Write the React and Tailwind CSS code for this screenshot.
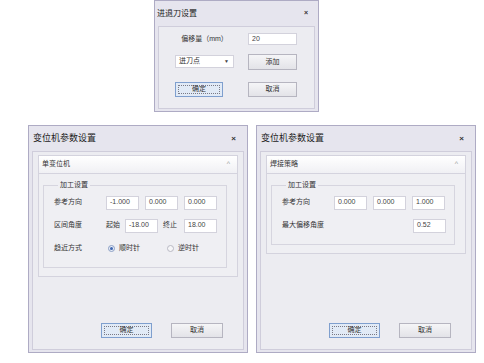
const FONT = "font-['Liberation_Sans','Noto_Sans_CJK_SC',sans-serif]";

function Btn({ children, primary, className = "" }) {
  if (primary) {
    return (
      <div className={`flex border border-[#7f9fce] bg-[#e1eaf6] p-[2px] ${className}`}>
        <div className="flex flex-1 items-center justify-center border border-dotted border-[#7a7a86] text-[7px] text-[#333]">
          {children}
        </div>
      </div>
    );
  }
  return (
    <div
      className={`flex items-center justify-center border border-[#b6b5c0] bg-gradient-to-b from-[#f5f5f7] to-[#e3e3e8] text-[7px] text-[#333] ${className}`}
    >
      {children}
    </div>
  );
}

function Field({ value, className = "w-[33px]" }) {
  return (
    <div
      className={`flex h-[14px] items-center border border-[#d3d2dc] bg-white px-[3px] text-[7px] text-[#444] ${className}`}
    >
      {value}
    </div>
  );
}

function Radio({ checked }) {
  return (
    <div
      className={`flex h-[7px] w-[7px] items-center justify-center rounded-full border ${
        checked ? "border-[#8c9fc4] bg-[#e6ecf7]" : "border-[#b9b9c3] bg-[#f6f6f8]"
      }`}
    >
      {checked && <div className="h-[3px] w-[3px] rounded-full bg-[#3f67b0]" />}
    </div>
  );
}

function Row({ label, children }) {
  return (
    <div className="flex h-[14px] items-center">
      <span className="w-[52px] text-[7px] text-[#333]">{label}</span>
      {children}
    </div>
  );
}

function ParamDialog({ section, children }) {
  return (
    <div className="flex h-[228px] w-[220px] flex-col border border-[#aeabc4] bg-[#e6e5ee]">
      {/* title bar */}
      <div className="flex h-[25px] items-center justify-between pl-[4px] pr-[11px]">
        <span className="text-[9px] text-[#222]">变位机参数设置</span>
        <span className="text-[8px] font-bold text-[#333]">×</span>
      </div>

      {/* body */}
      <div className="mx-[3px] mb-[2px] flex flex-1 flex-col border border-[#cfcddb] bg-[#ececf1] px-[5px] pt-[3px]">
        <div className="border border-[#d4d3de] bg-[#efeff3]">
          <div className="flex h-[18px] items-center justify-between border-b border-[#d4d3de] bg-gradient-to-b from-white to-[#f0f0f4] pl-[3px] pr-[7px]">
            <span className="text-[7px] text-[#333]">{section}</span>
            <span className="text-[7px] text-[#999]">^</span>
          </div>
          <fieldset className="mb-[8px] ml-[4px] mr-[10px] mt-[6px] border border-[#d6d5df] pb-[11px] pl-[10px] pt-[5px]">
            <legend className="ml-[4px] px-[2px] text-[7px] text-[#333]">加工设置</legend>
            <div className="flex flex-col gap-[9px]">{children}</div>
          </fieldset>
        </div>

        <div className="flex-1" />

        <div className="flex justify-end gap-[19px] pb-[11px] pr-[15px]">
          <Btn primary className="h-[15px] w-[51px]">
            确定
          </Btn>
          <Btn className="h-[15px] w-[52px]">取消</Btn>
        </div>
      </div>
    </div>
  );
}

export default function App() {
  return (
    <div className={`flex h-[363px] w-[484px] flex-col overflow-hidden bg-white ${FONT}`}>
      {/* ---------------- 进退刀设置 ---------------- */}
      <div className="pl-[154px]">
        <div className="flex h-[112px] w-[165px] flex-col border border-[#aeabc4] bg-[#e6e5ee]">
          <div className="flex h-[25px] items-center justify-between pl-[2px] pr-[10px]">
            <span className="text-[8px] text-[#222]">进退刀设置</span>
            <span className="text-[7px] font-bold text-[#333]">×</span>
          </div>
          <div className="mx-[3px] mb-[2px] grid flex-1 grid-cols-[59px_49px] content-start gap-x-[14px] border border-[#cfcddb] bg-[#ececf1] pl-[16px] pt-[6px]">
            <div className="flex h-[12px] items-center justify-center text-[7px] text-[#333]">
              偏移量（mm）
            </div>
            <div className="flex h-[12px] items-center border border-[#d3d2dc] bg-white px-[3px] text-[7px] text-[#444]">
              20
            </div>

            <div className="mt-[10px] flex h-[13px] items-center justify-between border border-[#d3d2dc] bg-white pl-[3px] pr-[4px] text-[7px] text-[#333]">
              <span>进刀点</span>
              <span className="text-[5px] text-[#444]">▼</span>
            </div>
            <Btn className="mt-[9px] h-[16px]">添加</Btn>

            <Btn primary className="mt-[12px] h-[15px] w-[48px]">
              确定
            </Btn>
            <Btn className="mt-[12px] h-[15px]">取消</Btn>
          </div>
        </div>
      </div>

      {/* ---------------- 变位机参数设置 x2 ---------------- */}
      <div className="mt-[13px] flex gap-[8px] pl-[28px]">
        <ParamDialog section="单变位机">
          <Row label="参考方向">
            <div className="flex gap-[6px]">
              <Field value="-1.000" />
              <Field value="0.000" />
              <Field value="0.000" />
            </div>
          </Row>
          <Row label="区间角度">
            <span className="w-[19px] text-[7px] text-[#333]">起始</span>
            <Field value="-18.00" />
            <span className="ml-[5px] w-[21px] text-[7px] text-[#333]">终止</span>
            <Field value="18.00" />
          </Row>
          <Row label="趋近方式">
            <div className="flex w-[61px] items-center gap-[4px] pl-[2px]">
              <Radio checked />
              <span className="text-[7px] text-[#333]">顺时针</span>
            </div>
            <div className="flex items-center gap-[4px]">
              <Radio />
              <span className="text-[7px] text-[#333]">逆时针</span>
            </div>
          </Row>
        </ParamDialog>

        <ParamDialog section="焊接策略">
          <Row label="参考方向">
            <div className="flex gap-[6px]">
              <Field value="0.000" />
              <Field value="0.000" />
              <Field value="1.000" />
            </div>
          </Row>
          <Row label="最大偏移角度">
            <div className="ml-[79px]">
              <Field value="0.52" />
            </div>
          </Row>
        </ParamDialog>
      </div>
    </div>
  );
}
